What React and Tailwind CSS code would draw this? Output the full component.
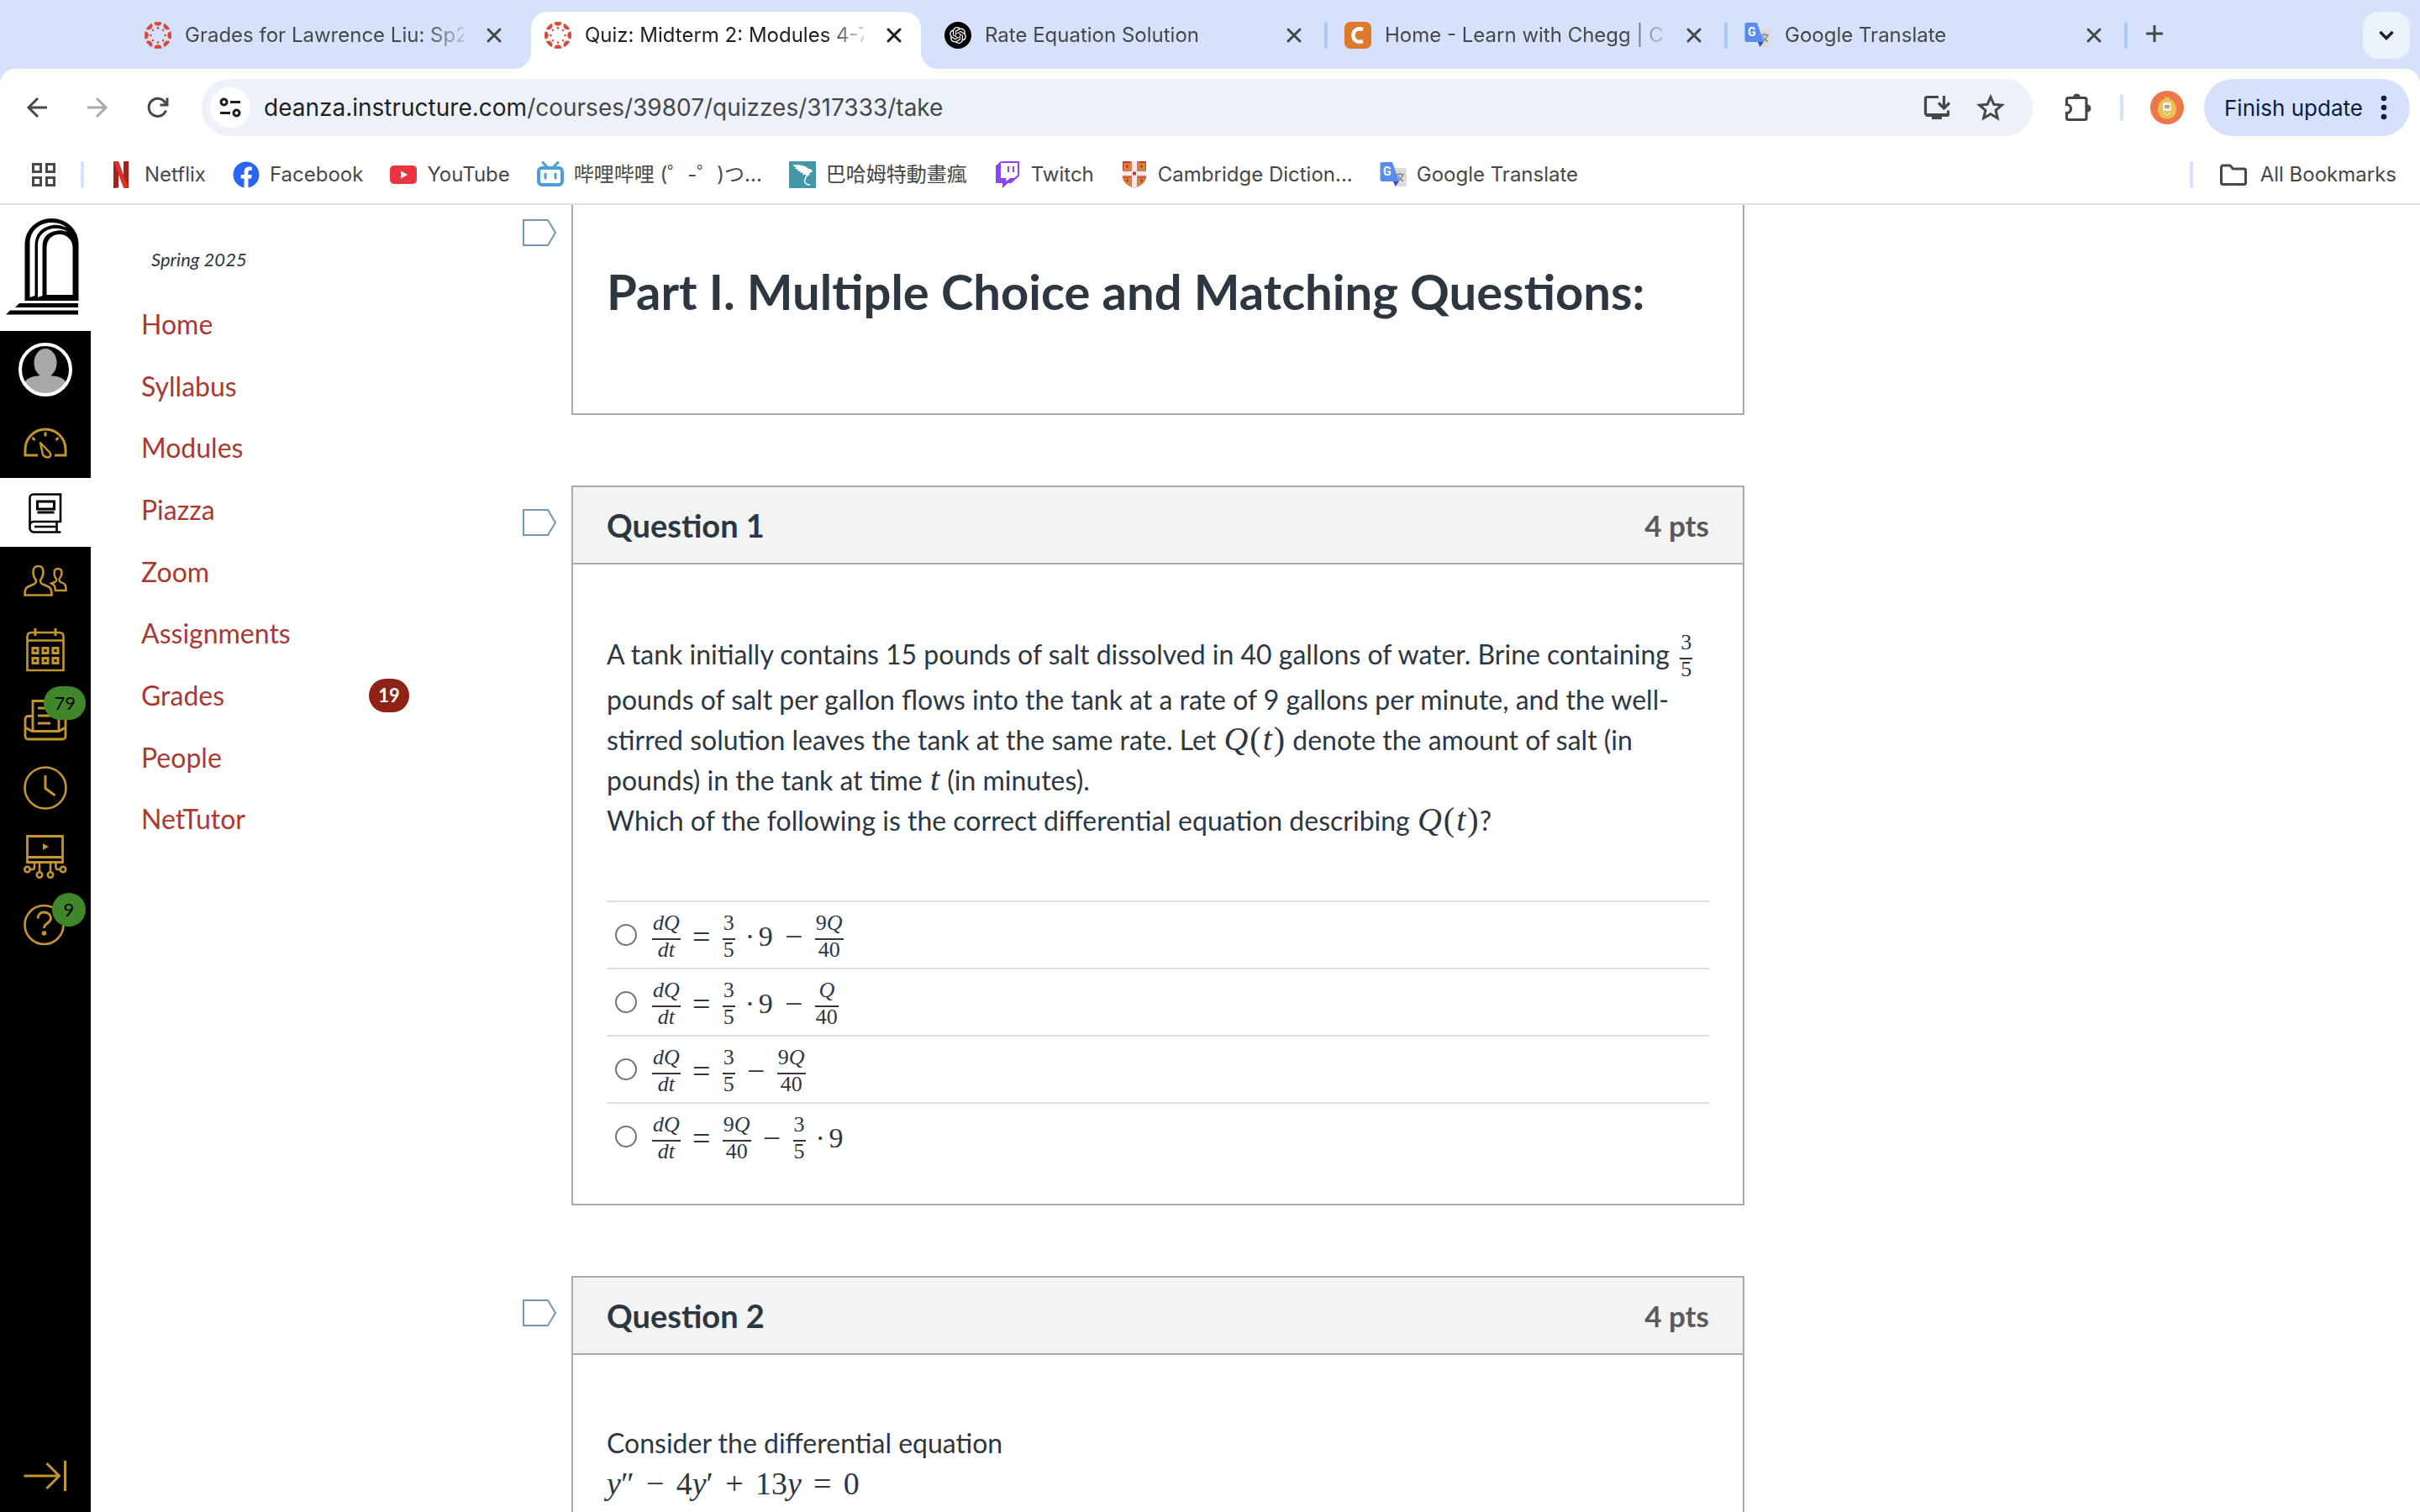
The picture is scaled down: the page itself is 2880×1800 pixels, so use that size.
import React from "react";
import { FaFacebook } from "react-icons/fa";
import { RiOpenaiFill } from "react-icons/ri";

/* ---------- favicons ---------- */

function CanvasIcon() {
  const angles = [0, 45, 90, 135, 180, 225, 270, 315];
  return (
    <svg viewBox="0 0 32 32" className="size-8 shrink-0" fill="#d64c3b" aria-hidden="true">
      <clipPath id="canvas-ring">
        <circle cx="16" cy="16" r="16" />
      </clipPath>
      <g clipPath="url(#canvas-ring)">
        {angles.map((a) => (
          <g key={a} transform={`rotate(${a} 16 16)`}>
            <circle cx="16" cy="0" r="4.8" />
            <circle cx="16" cy="7.4" r="1.3" />
          </g>
        ))}
      </g>
    </svg>
  );
}

function OpenAiIcon() {
  return (
    <span className="flex size-8 shrink-0 items-center justify-center rounded-full bg-black text-white">
      <RiOpenaiFill className="size-6" />
    </span>
  );
}

function CheggIcon() {
  return (
    <svg viewBox="0 0 32 32" className="size-8 shrink-0" aria-hidden="true">
      <rect width="32" height="32" rx="7" fill="#dd7a2e" />
      <path d="M22 9C15 6.500 10.500 10.500 10.500 16s4.500 9.500 11.500 7" fill="none" stroke="#fff" strokeWidth="4.500" />
    </svg>
  );
}

function TranslateIcon() {
  return (
    <svg viewBox="0 0 32 32" className="size-8 shrink-0" aria-hidden="true">
      <path d="M13 8h17a2 2 0 0 1 2 2v18a2 2 0 0 1-2 2H19z" fill="#dcdcdc" />
      <path d="M16 24h7l-4.500 6z" fill="#3c50b4" />
      <path d="M2.500 1H15l8 23H2.500A2 2 0 0 1 .5 22V3a2 2 0 0 1 2-2z" fill="#5a8cee" />
      <path d="M19 15.500h10M24 13.500v2M27.500 15.500c-1 4-3.500 6.500-6.500 8M21.500 17c1 2.500 3.500 5 6.500 6.500" fill="none" stroke="#7b8d96" strokeWidth="1.600" />
      <text x="4" y="17" fontSize="14" fontWeight="700" fill="#fff" fontFamily="Roboto, sans-serif">G</text>
    </svg>
  );
}

function NetflixIcon() {
  return (
    <svg viewBox="0 0 32 32" className="size-8 shrink-0" aria-hidden="true">
      <path d="M7 0h6v31.500L7 32zM19 0h6v32l-6-.5z" fill="#a3211c" />
      <path d="M7 0h6l12 32-6-.5z" fill="#d8312a" />
    </svg>
  );
}

function YouTubeIcon() {
  return (
    <svg viewBox="0 0 32 32" className="size-8 shrink-0" aria-hidden="true">
      <rect y="5" width="32" height="22" rx="5" fill="#ea3440" />
      <path d="M13 11.500v9l8-4.500z" fill="#fff" />
    </svg>
  );
}

function BilibiliIcon() {
  return (
    <svg viewBox="0 0 32 32" className="size-8 shrink-0" fill="none" stroke="#4a9fd4" aria-hidden="true">
      <path d="M7 1.500l5 5M25 1.500l-5 5" strokeWidth="3" strokeLinecap="round" />
      <rect x="2" y="8" width="28" height="20" rx="4" strokeWidth="4" />
      <path d="M10 15v5M22 15v5" strokeWidth="3" strokeLinecap="round" />
    </svg>
  );
}

function BahamutIcon() {
  return (
    <svg viewBox="0 0 32 32" className="size-8 shrink-0" aria-hidden="true">
      <rect width="32" height="32" rx="1" fill="#4497a6" />
      <path d="M4 4.500C12 3.500 20 5 24 9.500l1.500-.5 3 3-3 1-1.500 3-3 2-2-2.500-3 1 1-2.500-4-.5 1-1.500-4-.5 1-1.500-4-1.500 1.500-1z" fill="#fff" />
      <path d="M23 16c-4 3-5 6-4 9 1 2.500 3 3 6 3" fill="none" stroke="#fff" strokeWidth="1.500" />
    </svg>
  );
}

function TwitchIcon() {
  return (
    <svg viewBox="0 0 32 32" className="size-8 shrink-0" aria-hidden="true">
      <path d="M8 0h22v17.500L20.500 26h-4L10 32v-6H2V5.500z" fill="#8a46f6" />
      <path d="M8 2h20v14.500L24 20h-5l-4.500 4v-4H8z" fill="#fff" />
      <path d="M16 6h2v7h-2zM22 6h2v7h-2z" fill="#8a46f6" />
    </svg>
  );
}

function CambridgeIcon() {
  return (
    <svg viewBox="0 0 32 32" className="size-8 shrink-0" aria-hidden="true">
      <clipPath id="shield">
        <path d="M2 0h28v18c0 7-6 11-14 14C8 29 2 25 2 18z" />
      </clipPath>
      <g clipPath="url(#shield)">
        <rect width="32" height="32" fill="#b9402c" />
        <path d="M3 2h9v8H3zM20 2h9v8h-9zM3 20h9v9H3zM20 20h9v9h-9z" fill="#cf8a35" />
        <path d="M6 4.500h3v3H6zM23 4.500h3v3h-3zM6 21.500h3v3H6zM23 21.500h3v3h-3z" fill="#b9402c" />
        <path d="M11 0h10v32H11zM0 10h32v9H0z" fill="#e2715f" />
        <path d="M13 0h6v32h-6zM0 12h32v5H0z" fill="#f0ecea" />
        <path d="M14 12.500h4v4h-4z" fill="#c9392b" />
      </g>
    </svg>
  );
}

/* ---------- browser chrome ---------- */

function CloseIcon() {
  return (
    <svg viewBox="0 0 32 32" className="size-8" fill="none" stroke="currentColor" strokeWidth="3" strokeLinecap="round" aria-hidden="true">
      <path d="M9 9l14 14M23 9L9 23" />
    </svg>
  );
}

function TabFoot({ side }) {
  return (
    <svg
      viewBox="0 0 20 20"
      aria-hidden="true"
      className={side === "left" ? "absolute bottom-0 -left-5 size-5" : "absolute bottom-0 -right-5 size-5"}
      fill="#fff"
    >
      <path d={side === "left" ? "M20 0v20H0A20 20 0 0 0 20 0z" : "M0 0v20h20A20 20 0 0 1 0 0z"} />
    </svg>
  );
}

function Tab({ icon, title, active, separator }) {
  return (
    <div className="flex h-full items-end">
      <div
        className={
          active
            ? "relative flex h-17 w-[464px] items-center rounded-t-[20px] bg-white pb-3 pl-4 text-[#1f1f1f]"
            : "relative flex h-17 w-[464px] items-center pb-3 pl-4 text-[#474747]"
        }
      >
        {active && <TabFoot side="left" />}
        {icon}
        <span className="ml-4 w-[332px] overflow-hidden whitespace-nowrap text-[24px] leading-8 [mask-image:linear-gradient(to_right,#000_86%,transparent_103%)]">
          {title}
        </span>
        <button type="button" aria-label={`Close ${title}`} className="ml-5">
          <CloseIcon />
        </button>
        {active && <TabFoot side="right" />}
      </div>
      <span className={separator ? "mx-1 mb-6 h-8 w-1 rounded-full bg-[#adc8f7]" : "mx-1 h-8 w-1"} />
    </div>
  );
}

const tabs = [
  { title: "Grades for Lawrence Liu: Sp2", icon: <CanvasIcon /> },
  { title: "Quiz: Midterm 2: Modules 4-7", icon: <CanvasIcon />, active: true },
  { title: "Rate Equation Solution", icon: <OpenAiIcon />, separator: true },
  { title: "Home - Learn with Chegg | Ch", icon: <CheggIcon />, separator: true },
  { title: "Google Translate", icon: <TranslateIcon />, separator: true },
];

function TabStrip() {
  return (
    <div className="flex h-[82px] bg-[#d6e1fc] pl-[156px]">
      {tabs.map((t) => (
        <Tab key={t.title} {...t} />
      ))}
      <button type="button" aria-label="New tab" className="ml-3 h-20 text-[#474747]">
        <svg viewBox="0 0 32 32" className="size-8" fill="none" stroke="currentColor" strokeWidth="3" aria-hidden="true">
          <path d="M16 6v20M6 16h20" />
        </svg>
      </button>
      <button
        type="button"
        aria-label="Search tabs"
        className="mt-[14px] mr-3 ml-auto flex size-14 items-center justify-center rounded-[18px] bg-[#ebf2fc]"
      >
        <svg viewBox="0 0 24 24" className="size-6" fill="none" stroke="#1f1f1f" strokeWidth="3.500" aria-hidden="true">
          <path d="M4.500 8l7.500 7.500L19.500 8" />
        </svg>
      </button>
    </div>
  );
}

function Toolbar() {
  return (
    <div className="bg-[#d6e1fc]">
      <div className="flex h-[92px] items-center rounded-t-[18px] bg-white pr-3 pl-7 text-[#474747]">
        <button type="button" aria-label="Back">
          <svg viewBox="0 0 32 32" className="size-8" fill="none" stroke="currentColor" strokeWidth="3" aria-hidden="true">
            <path d="M28 16H6M17 5L6 16l11 11" />
          </svg>
        </button>
        <button type="button" aria-label="Forward" className="ml-10 text-[#a9a9a9]">
          <svg viewBox="0 0 32 32" className="size-8" fill="none" stroke="currentColor" strokeWidth="3" aria-hidden="true">
            <path d="M4 16h22M15 5l11 11-11 11" />
          </svg>
        </button>
        <button type="button" aria-label="Reload" className="ml-10">
          <svg viewBox="0 0 32 32" className="size-8" fill="none" stroke="currentColor" strokeWidth="3" aria-hidden="true">
            <path d="M25.500 19.500A10.500 10.500 0 1 1 24 9.500l3 3M27 4.500v8.500h-8.500" />
          </svg>
        </button>

        <div className="ml-9 flex h-17 flex-1 items-center rounded-full bg-[#edf2fa] pr-8 pl-[10px]">
          <button type="button" aria-label="View site information" className="flex size-12 items-center justify-center rounded-full bg-white">
            <svg viewBox="0 0 28 28" className="size-7" fill="none" stroke="#1f1f1f" strokeWidth="3" aria-hidden="true">
              <circle cx="6.500" cy="7.500" r="3.500" />
              <path d="M14 7.500h12M2 20.500h12" />
              <circle cx="21.500" cy="20.500" r="3.500" />
            </svg>
          </button>
          <div className="ml-4 flex-1 text-[28px] leading-8 whitespace-nowrap" role="textbox" aria-label="Address">
            <span className="text-[#1f1f1f]">deanza.instructure.com</span>/courses/39807/quizzes/317333/take
          </div>
          <button type="button" aria-label="Install app">
            <svg viewBox="0 0 36 36" className="size-9" fill="none" stroke="currentColor" strokeWidth="3.200" aria-hidden="true">
              <path d="M20 5.500H6.500a2 2 0 0 0-2 2v17a2 2 0 0 0 2 2h25v-5" />
              <path d="M5 27h27" strokeWidth="4" />
              <path d="M12 30h12" strokeWidth="4" />
              <path d="M26.500 4v14M20 12.500l6.500 6.500 6.500-6.500" />
            </svg>
          </button>
          <button type="button" aria-label="Bookmark this tab" className="ml-7">
            <svg viewBox="0 0 36 36" className="size-9" fill="none" stroke="currentColor" strokeWidth="3" aria-hidden="true">
              <path d="M18 5.500l3.800 8.800 9.500.8-7.200 6.300 2.200 9.300-8.300-5-8.300 5 2.200-9.300-7.200-6.300 9.500-.8z" />
            </svg>
          </button>
        </div>

        <button type="button" aria-label="Extensions" className="ml-9">
          <svg viewBox="0 0 36 36" className="size-9" aria-hidden="true">
            <path
              d="M4.500 8.500a2 2 0 0 1 2-2h19.500a2 2 0 0 1 2 2v22a2 2 0 0 1-2 2H6.500a2 2 0 0 1-2-2v-6a4.800 4.800 0 0 0 0-10z"
              fill="none"
              stroke="currentColor"
              strokeWidth="3.200"
            />
            <path d="M12 6a4.500 4.500 0 0 1 9 0zM29 14.500a4.500 4.500 0 0 1 0 9z" fill="currentColor" />
          </svg>
        </button>
        <span className="ml-8 h-8 w-1 rounded-full bg-[#d6e1fc]" />
        <button type="button" aria-label="Profile" className="ml-8">
          <svg viewBox="0 0 40 40" className="size-10" aria-hidden="true">
            <circle cx="20" cy="20" r="20" fill="#ee764b" />
            <path d="M17 9.500V7.500h6v2c5 2 8 7 8 13 0 7-5 11-11 11s-11-4-11-11c0-6 3-11 8-13z" fill="#e9c04e" />
            <rect x="15" y="14" width="10" height="10" rx="1" fill="#f4efe4" />
            <rect x="17" y="17" width="6" height="4" fill="#9fa8a0" />
            <circle cx="17" cy="27" r="1" fill="#fff" />
            <circle cx="20" cy="29" r="1" fill="#fff" />
            <circle cx="23" cy="27" r="1" fill="#fff" />
          </svg>
        </button>
        <button
          type="button"
          className="ml-6 flex h-17 w-[245px] items-center justify-between rounded-full bg-[#d6e1fc] px-6 text-[26px] whitespace-nowrap text-[#0d1c40]"
        >
          Finish update
          <svg viewBox="0 0 14 32" className="h-8 w-[14px]" fill="currentColor" aria-hidden="true">
            <circle cx="7" cy="5" r="3.300" />
            <circle cx="7" cy="16" r="3.300" />
            <circle cx="7" cy="27" r="3.300" />
          </svg>
        </button>
      </div>
    </div>
  );
}

const bookmarks = [
  { label: "Netflix", icon: <NetflixIcon /> },
  { label: "Facebook", icon: <FaFacebook className="size-8 shrink-0 text-[#2b64f5]" /> },
  { label: "YouTube", icon: <YouTubeIcon /> },
  { label: "哔哩哔哩 (゜-゜)つ...", icon: <BilibiliIcon /> },
  { label: "巴哈姆特動畫瘋", icon: <BahamutIcon /> },
  { label: "Twitch", icon: <TwitchIcon /> },
  { label: "Cambridge Diction...", icon: <CambridgeIcon /> },
  { label: "Google Translate", icon: <TranslateIcon /> },
];

function BookmarksBar() {
  return (
    <div className="flex h-[70px] items-center border-b-2 border-[#e0e0e0] bg-white pr-7 pl-9 text-[24px] leading-8 text-[#474747]">
      <button type="button" aria-label="Tab groups">
        <svg viewBox="0 0 32 32" className="size-8" fill="none" stroke="currentColor" strokeWidth="3" aria-hidden="true">
          <path d="M3.500 3.500h9v9h-9zM19.500 3.500h9v9h-9zM3.500 19.500h9v9h-9zM19.500 19.500h9v9h-9z" />
        </svg>
      </button>
      <span className="ml-7 h-8 w-1 rounded-full bg-[#d6e1fc]" />
      <nav aria-label="Bookmarks" className="ml-7 flex gap-8 whitespace-nowrap">
        {bookmarks.map((b) => (
          <a key={b.label} href="#" className="flex items-center gap-3">
            {b.icon}
            {b.label}
          </a>
        ))}
      </nav>
      <span className="mr-8 ml-auto h-8 w-1 rounded-full bg-[#d6e1fc]" />
      <button type="button" className="flex items-center gap-4 whitespace-nowrap">
        <svg viewBox="0 0 32 32" className="size-8" fill="none" stroke="currentColor" strokeWidth="3" strokeLinejoin="round" aria-hidden="true">
          <path d="M1.500 7a2 2 0 0 1 2-2H12l3.500 4H28.500a2 2 0 0 1 2 2v14.500a2 2 0 0 1-2 2h-25a2 2 0 0 1-2-2z" />
        </svg>
        All Bookmarks
      </button>
    </div>
  );
}

/* ---------- global navigation ---------- */

function NavSvg({ children }) {
  return (
    <svg viewBox="0 0 52 52" className="size-[52px]" fill="none" stroke="currentColor" strokeWidth="3" aria-hidden="true">
      {children}
    </svg>
  );
}

const globalNav = [
  {
    label: "Dashboard",
    icon: (
      <NavSvg>
        <path d="M17 40H2v-7a24 24 0 0 1 48 0v7H37" />
        <path d="M20 25l11.500 12c2 4-1 6-3.500 5.500s-5-1.500-5.500-5.500z" strokeWidth="2.500" strokeLinejoin="round" />
        <path d="M26 12.500v5M10.500 19l3 3M41.500 19l-3 3" />
      </NavSvg>
    ),
  },
  {
    label: "Courses",
    active: true,
    icon: (
      <NavSvg>
        <path d="M7.500 44V8.500a4 4 0 0 1 4-4H44V37H12a4.500 4.500 0 0 0-4.500 5v3a5 5 0 0 0 5 4.500H44.500" strokeWidth="2.600" />
        <path d="M16.500 13h20v9h-20zM16.500 26h20" strokeWidth="3" />
        <path d="M39.500 38v11M38 43H13" strokeWidth="2.600" />
      </NavSvg>
    ),
  },
  {
    label: "Groups",
    icon: (
      <NavSvg>
        <path d="M1.500 42.500c0-9 2-9.500 9.500-12.500 3-1 4-2 4-5.500-3-3-3.500-7-3.500-10 0-4.500 2.500-6.500 6-6.500s6 2 6 6.500c0 3-1 7-3.500 10 0 3.500 1 4.500 4 5.500 7.500 3 9.500 3.500 9.500 12.500z" strokeWidth="2.600" />
        <path d="M38 37h12.500c0-7-1-8-5-9.500-3-1-3.500-2-3-4.500 2-2 3-4 3-7 0-3.500-1.500-5-4.500-5s-4.500 1.500-4.500 5c0 3 .5 5 2.500 7 .5 2.500 0 3.500-3 4.500l-3 1 4 3z" strokeWidth="2.400" />
      </NavSvg>
    ),
  },
  {
    label: "Calendar",
    icon: (
      <NavSvg>
        <path d="M4.500 50V10q0-5 5-5h33q5 0 5 5v40zM4.500 14.500h43" strokeWidth="2.600" />
        <path d="M14 0v9M38 0v9" />
        <path d="M11 23.500h6v6h-6zM23 23.500h6v6h-6zM35 23.500h6v6h-6zM11 35.500h6v6h-6zM23 35.500h6v6h-6zM35 35.500h6v6h-6z" />
      </NavSvg>
    ),
  },
  {
    label: "Inbox",
    badge: "79",
    icon: (
      <NavSvg>
        <path d="M11 40V4.500h31V40" strokeWidth="2.800" />
        <path d="M10 22.500H6q-4 0-4 4V46q0 4 4 4h40q4 0 4-4V26.500q0-4-4-4M2 36l8 4.500h32l8-4.500" strokeWidth="2.800" />
        <path d="M17 13h15M17 22h15M17 31h15" />
      </NavSvg>
    ),
  },
  {
    label: "History",
    icon: (
      <NavSvg>
        <circle cx="26" cy="26" r="24.500" strokeWidth="2.600" />
        <path d="M26 11v15.500L37.500 35" />
      </NavSvg>
    ),
  },
  {
    label: "Studio",
    icon: (
      <NavSvg>
        <path d="M4.500 1.500h42v31h-42zM4.500 26.500h42" strokeWidth="2.800" />
        <path d="M23 10v8l7-4z" fill="currentColor" stroke="none" />
        <path d="M19 33v10M32 33v10M13 33v5.500q0 2.500-2.500 2.500H8M38.500 33v5.500q0 2.500 2.500 2.500h2" strokeWidth="2.600" />
        <circle cx="4.500" cy="41" r="3.200" strokeWidth="2.600" />
        <circle cx="47" cy="41" r="3.200" strokeWidth="2.600" />
        <circle cx="19" cy="47.500" r="3.200" strokeWidth="2.600" />
        <circle cx="32" cy="47.500" r="3.200" strokeWidth="2.600" />
      </NavSvg>
    ),
  },
  {
    label: "Help",
    badge: "9",
    icon: (
      <NavSvg>
        <circle cx="24.500" cy="25" r="23" strokeWidth="2.600" />
        <path d="M17 17.500c0-4.500 3-7.500 7.500-7.500s8 3 8 7c0 6.500-8 5.500-8 12" strokeWidth="2.800" />
        <circle cx="24.500" cy="35" r="2.800" fill="currentColor" stroke="none" />
      </NavSvg>
    ),
  },
];

function GlobalNav() {
  return (
    <nav aria-label="Global Navigation" className="flex w-[108px] shrink-0 flex-col bg-black text-[#c4952f]">
      <a href="#" aria-label="De Anza College" className="bg-white">
        <svg viewBox="0 4 108 150" className="h-[150px] w-full" aria-hidden="true">
          <path d="M29.500 118V50A32 30 0 0 1 93.500 50V118z" fill="#000" />
          <path d="M35.500 114V50C35.500 34 48 25 61 25C69 25 75 27 79 31C73 28 68 27 63 28C50 30 41.500 38 41.500 52V112z" fill="#fff" />
          <path d="M45 114V52C45 39 55 32 66 32C72 32 77 33 80 36C75 34 70 34 66 35C55 37 50.500 44 50.500 54V112z" fill="#fff" />
          <path d="M55.500 111V55C55.500 45 62 39 71 39C80 39 86.500 46 86.500 55V111z" fill="#fff" />
          <path d="M23 121H93V126H18zM12 129.500H93V134.500H7z" fill="#000" />
        </svg>
      </a>
      <a href="#" aria-label="Account" className="flex h-[93px] justify-center pt-[14px]">
        <svg viewBox="0 0 64 64" className="size-16" aria-hidden="true">
          <clipPath id="avatar">
            <circle cx="32" cy="32" r="28.500" />
          </clipPath>
          <g clipPath="url(#avatar)" fill="#a8a8a8">
            <ellipse cx="32" cy="24" rx="13.500" ry="17" />
            <path d="M26 36h12v3c8 1 18 2 20 12v12H6V51c2-10 12-11 20-12z" />
          </g>
          <circle cx="32" cy="32" r="30" fill="none" stroke="#fff" strokeWidth="4" />
        </svg>
      </a>
      {globalNav.map((n) => (
        <a
          key={n.label}
          href="#"
          aria-label={n.label}
          className={
            n.active
              ? "relative flex h-[82px] items-center justify-center bg-white text-black"
              : "relative flex h-[82px] items-center justify-center"
          }
        >
          {n.icon}
          {n.badge && (
            <span className="absolute top-[2px] right-[6px] flex h-10 min-w-10 items-center justify-center rounded-full bg-[#3f872a] px-3 text-[22px] leading-8 text-black">
              {n.badge}
            </span>
          )}
        </a>
      ))}
      <button type="button" aria-label="Expand global navigation" className="mt-auto mb-[17px] flex justify-center">
        <NavSvg>
          <path d="M0.500 26h42M27.500 11l15 15-15 15M49.500 8v36" />
        </NavSvg>
      </button>
    </nav>
  );
}

/* ---------- course navigation ---------- */

const courseLinks = [
  { label: "Home" },
  { label: "Syllabus" },
  { label: "Modules" },
  { label: "Piazza" },
  { label: "Zoom" },
  { label: "Assignments" },
  { label: "Grades", badge: "19" },
  { label: "People" },
  { label: "NetTutor" },
];

function CourseNav() {
  return (
    <nav aria-label="Course Navigation" className="w-[514px] shrink-0 pr-[135px] pl-15">
      <p className="mt-[49px] pl-3 text-[22px] leading-8 italic">Spring 2025</p>
      <ul className="mt-6 flex h-[663px] flex-col">
        {courseLinks.map((l) => (
          <li key={l.label} className="flex flex-1 items-center justify-between">
            <a href="#" className="text-[32px] leading-10 text-[#ab3831]">
              {l.label}
            </a>
            {l.badge && (
              <span className="flex h-10 w-12 items-center justify-center rounded-full bg-[#8f2117] text-[22px] font-bold text-white">
                {l.badge}
              </span>
            )}
          </li>
        ))}
      </ul>
    </nav>
  );
}

/* ---------- maths ---------- */

function V({ children }) {
  return <i className="font-['Liberation_Serif',serif]">{children}</i>;
}

function Frac({ num, den }) {
  return (
    <span className="inline-flex flex-col text-center align-[18px] font-['Liberation_Serif',serif] text-[26px] leading-6">
      <span className="border-b-2 border-current px-px pb-[6px]">{num}</span>
      <span className="px-px">{den}</span>
    </span>
  );
}

function Op({ children }) {
  return <span className="mx-[14px] w-[22px] text-center text-[38px]">{children}</span>;
}

function QofT() {
  return (
    <span className="inline-flex gap-[2px] px-px font-['Liberation_Serif',serif] text-[40px] leading-10">
      <V>Q</V>
      <span>(</span>
      <V>t</V>
      <span>)</span>
    </span>
  );
}

const dQdt = <Frac num={<V>dQ</V>} den={<V>dt</V>} />;
const threeFifths = <Frac num="3" den="5" />;
const nineQ = <Frac num={<>9<V>Q</V></>} den="40" />;
const oneQ = <Frac num={<V>Q</V>} den="40" />;
const eq = <Op>=</Op>;
const minus = <Op>−</Op>;
const dotNine = (
  <>
    <span className="ml-3 w-2 text-center">·</span>
    <span className="ml-2">9</span>
  </>
);

const options = [
  { id: "a", body: <>{dQdt}{eq}{threeFifths}{dotNine}{minus}{nineQ}</> },
  { id: "b", body: <>{dQdt}{eq}{threeFifths}{dotNine}{minus}{oneQ}</> },
  { id: "c", body: <>{dQdt}{eq}{threeFifths}{minus}{nineQ}</> },
  { id: "d", body: <>{dQdt}{eq}{nineQ}{minus}{threeFifths}{dotNine}</> },
];

/* ---------- quiz ---------- */

function FlagButton({ className }) {
  return (
    <div className="w-[58px] shrink-0">
      <button type="button" aria-label="Flag question" className={className}>
        <svg viewBox="0 0 40 32" className="h-8 w-10" fill="#fff" stroke="#7394b3" strokeWidth="2" aria-hidden="true">
          <path d="M1 1h29l9 15-9 15H1z" />
        </svg>
      </button>
    </div>
  );
}

function Question({ title, points, children }) {
  return (
    <section className="mt-[84px] flex">
      <FlagButton className="mt-7" />
      <div className="flex-1 border-2 border-[#aaaaaa]">
        <header className="flex h-[92px] items-center justify-between border-b-2 border-[#aaaaaa] bg-[#f2f4f4] px-10 font-bold">
          <h2 className="text-[38px]">{title}</h2>
          <span className="text-[35px] text-[#5a5a5a]">{points}</span>
        </header>
        <div className="px-10 pt-[81px] pb-[41px]">{children}</div>
      </div>
    </section>
  );
}

function Quiz() {
  return (
    <main className="min-w-0 flex-1 overflow-hidden pr-[804px] text-[32px] leading-[48px]">
      <section className="flex">
        <FlagButton className="mt-[17px]" />
        <div className="flex-1 border-x-2 border-b-2 border-[#aaaaaa] px-10 pt-[67px] pb-[109px]">
          <h1 className="text-[58px] leading-[72px] font-bold whitespace-nowrap">
            Part I. Multiple Choice and Matching Questions:
          </h1>
        </div>
      </section>

      <Question title="Question 1" points="4 pts">
        <p>
          A tank initially contains 15 pounds of salt dissolved in 40 gallons of water. Brine containing{" "}
          <span className="px-1">{threeFifths}</span> pounds of salt per gallon flows into the tank at a rate of 9
          gallons per minute, and the well-stirred solution leaves the tank at the same rate. Let <QofT /> denote the
          amount of salt (in pounds) in the tank at time{" "}
          <i className="px-px font-['Liberation_Serif',serif] text-[40px] leading-10">t</i> (in minutes).
          <br />
          Which of the following is the correct differential equation describing <QofT />?
        </p>
        <div role="radiogroup" aria-label="Question 1 answers" className="mt-[71px]">
          {options.map((o) => (
            <label key={o.id} className="flex h-20 items-center border-t-2 border-[#dddddd] pl-[10px]">
              <input type="radio" name="question-1" className="size-[26px] appearance-none rounded-full border-2 border-[#767676] bg-white" />
              <span className="ml-[18px] flex items-center pt-1 font-['Liberation_Serif',serif] text-[34px] leading-10">{o.body}</span>
            </label>
          ))}
        </div>
      </Question>

      <Question title="Question 2" points="4 pts">
        <p>Consider the differential equation</p>
        <p className="flex font-['Liberation_Serif',serif] text-[38px]">
          <span><V>y</V>″</span>
          <Op>−</Op>
          <span>4<V>y</V>′</span>
          <Op>+</Op>
          <span>13<V>y</V></span>
          <Op>=</Op>
          <span>0</span>
        </p>
      </Question>
    </main>
  );
}

export default function App() {
  return (
    <div className="flex h-screen flex-col overflow-hidden bg-white font-[Inter,'Noto_Sans_CJK_SC',sans-serif]">
      <div className="shrink-0">
        <TabStrip />
        <Toolbar />
        <BookmarksBar />
      </div>
      <div className="flex min-h-0 flex-1 font-[Lato,sans-serif] text-[#2d3742]">
        <GlobalNav />
        <CourseNav />
        <Quiz />
      </div>
    </div>
  );
}
